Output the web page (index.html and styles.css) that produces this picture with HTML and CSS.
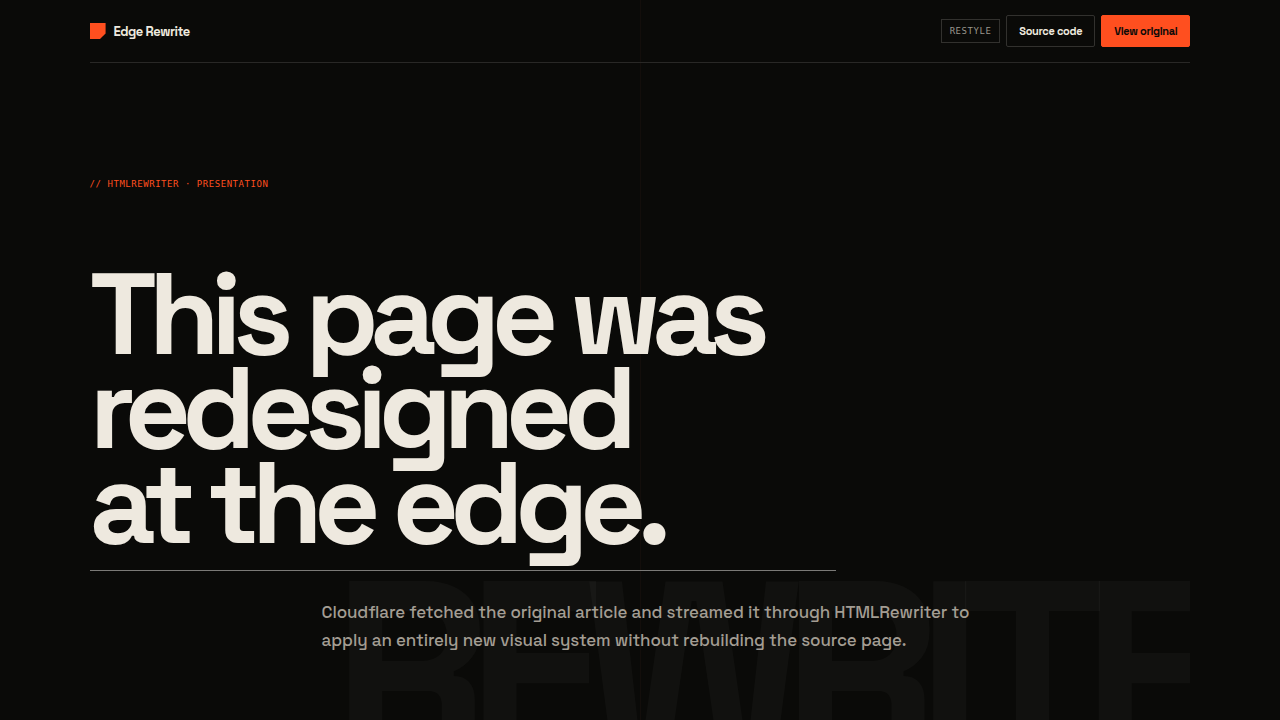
FILE: index.html
```
<!DOCTYPE html>
<html lang="en">
<head>
    <meta charset="UTF-8">
    <meta name="viewport" content="width=device-width, initial-scale=1.0">
    <title>Edge Rewrite</title>
    <link rel="stylesheet" href="styles.css">
</head>
<body>
    <div class="page">
        <header class="site-header">
            <a class="brand" href="#top">
                <span class="brand-mark"></span>
                Edge Rewrite
            </a>
            <nav class="actions">
                <span class="tag">RESTYLE</span>
                <a class="button" href="#source">Source code</a>
                <a class="button button-primary" href="#original">View original</a>
            </nav>
        </header>

        <main class="hero" id="top">
            <p class="eyebrow">// HTMLREWRITER · PRESENTATION</p>
            <h1 class="title">This page was<br>redesigned<br>at the edge.</h1>
            <p class="lead">Cloudflare fetched the original article and streamed it through HTMLRewriter to apply an entirely new visual system without rebuilding the source page.</p>
        </main>
        <div class="watermark" aria-hidden="true">REWRITE</div>
    </div>
</body>
</html>
```

FILE: styles.css
```
* {
    margin: 0;
    padding: 0;
    box-sizing: border-box;
}
body {
    background: #0a0a08;
    color: #eee9df;
    font-family: "Space Grotesk", Inter, sans-serif;
}
.page {
    position: relative;
    min-height: 100vh;
    padding: 0 7vw;
    overflow: hidden;
}
/* hairline down the middle */
.page::before {
    content: "";
    position: absolute;
    top: 0;
    bottom: 0;
    left: 50%;
    width: 1px;
    background: rgba(255, 130, 90, 0.04);
}
.site-header {
    position: relative;
    display: flex;
    align-items: center;
    justify-content: space-between;
    padding: 15px 0;
    border-bottom: 1px solid #292826;
}
.brand {
    display: flex;
    align-items: center;
    gap: 8px;
    color: inherit;
    font-size: 13px;
    font-weight: 600;
    letter-spacing: -0.04em;
    text-decoration: none;
}
.brand-mark {
    width: 16px;
    height: 16px;
    background: #ff4f1f;
    clip-path: polygon(0 0, 100% 0, 100% 65%, 65% 100%, 0 100%);
}
.actions {
    display: flex;
    align-items: center;
    gap: 6px;
}
.tag {
    padding: 0 8px;
    border: 1px solid #32312e;
    color: #99958c;
    font-family: "DejaVu Sans Mono", monospace;
    font-size: 9px;
    line-height: 22px;
    letter-spacing: 0.06em;
}
.button {
    padding: 0 12px;
    border: 1px solid #32312e;
    border-radius: 2px;
    color: inherit;
    font-size: 11px;
    font-weight: 600;
    line-height: 30px;
    letter-spacing: -0.03em;
    text-decoration: none;
}
.button-primary {
    border-color: #ff4f1f;
    background: #ff4f1f;
    color: #0a0a08;
}
.hero {
    position: relative;
    z-index: 1;
    padding: 113px 0 64px;
}
.eyebrow {
    color: #ff4f1f;
    font-family: "DejaVu Sans Mono", monospace;
    font-size: 9px;
    line-height: 16px;
    letter-spacing: 0.06em;
}
.title {
    width: fit-content;
    min-width: 746px;
    margin-top: 76px;
    padding-bottom: 19px;
    border-bottom: 1px solid #7b7a77;
    font-size: 9vw;
    font-weight: 700;
    line-height: 0.82;
    letter-spacing: -0.075em;
}
.lead {
    max-width: 892px;
    margin-top: 27px;
    padding-left: 232px;
    color: #a39d93;
    font-size: 17px;
    font-weight: 500;
    line-height: 28px;
    letter-spacing: -0.006em;
}
.watermark {
    position: absolute;
    top: 553px;
    left: 26vw;
    right: 7vw;
    overflow: hidden;
    color: rgba(238, 233, 223, 0.035);
    font-size: 250px;
    font-weight: 700;
    line-height: 236px;
    letter-spacing: -0.095em;
    white-space: nowrap;
}
```
